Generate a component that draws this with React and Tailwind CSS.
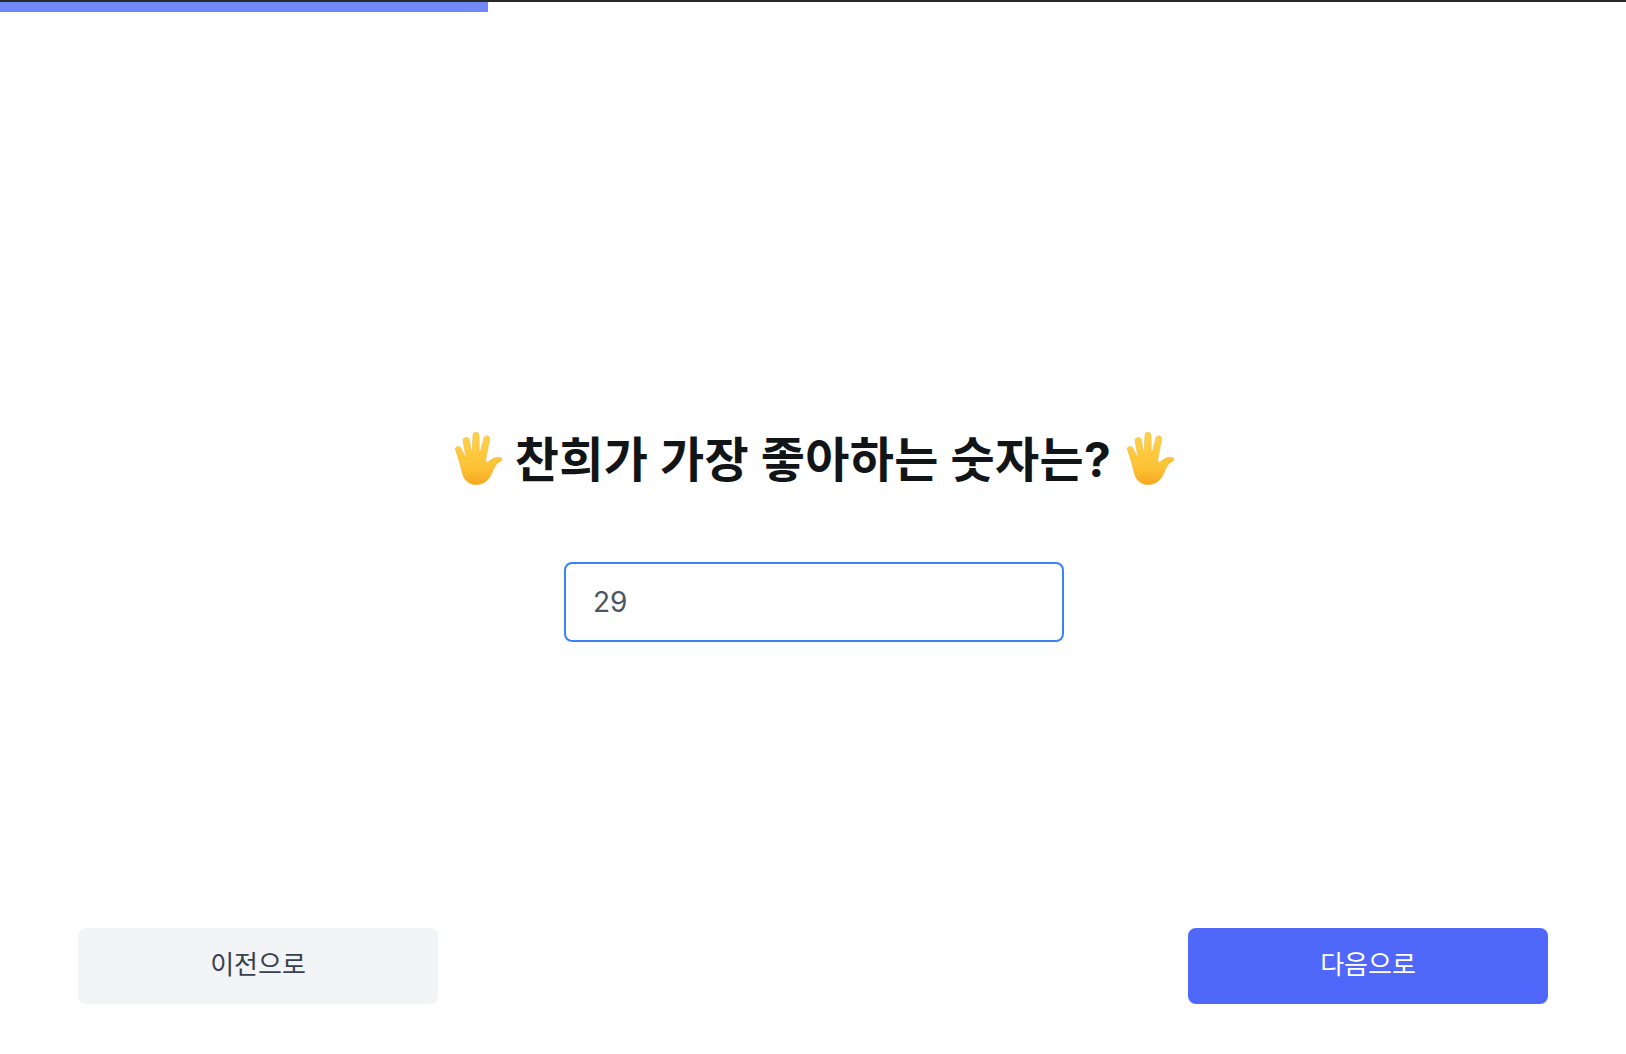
function Mano() {
  return (
    <svg viewBox="26 20 156 162" className="w-[52px] h-[54px] shrink-0" aria-hidden="true">
      <defs>
        <linearGradient id="piel" x1="0" y1="0" x2="0" y2="1">
          <stop offset="0" stopColor="#ffd34d" />
          <stop offset="0.65" stopColor="#fdc336" />
          <stop offset="1" stopColor="#f6a821" />
        </linearGradient>
      </defs>
      <path
        fill="url(#piel)"
        stroke="#f7ad2b"
        strokeWidth="1.5"
        d="M30 72C28 64 42 60 46 68L63 100L53 46C52 36 68 32 71 42L80 90L83 30C83 18 101 18 101 30L102 90L116 38C119 28 135 30 133 42L121 104C121 112 125 112 131 108C140 100 150 95 162 96C171 97 172 106 164 109C152 113 148 124 142 138C132 164 116 178 92 178C68 178 54 160 50 140C46 122 40 100 30 72Z"
      />
    </svg>
  );
}

export default function App() {
  return (
    <div className="min-h-[1054px] flex flex-col bg-white border-t-2 border-[#26282b] font-['Inter','Noto_Sans_CJK_KR',sans-serif]">
      <div className="h-[10px] w-[488px] bg-[#7189f7]" />

      <main className="flex-1 flex flex-col items-center pl-[2px] pt-[416px]">
        <h1 className="flex items-center gap-[10px] ml-[4px] h-[62px] text-[#111518] text-[48px] font-bold tracking-[0.35px] whitespace-nowrap">
          <Mano />
          <span className="-ml-[1px] mr-[5px] mt-[2px]">찬희가 가장 좋아하는 숫자는?</span>
          <Mano />
        </h1>
        <input
          type="text"
          defaultValue="29"
          className="mt-[72px] w-[500px] h-[80px] px-[27px] text-[28px] text-[#4b5563] border-2 border-[#3b82f6] rounded-lg outline-none"
        />
      </main>

      <div className="flex justify-between px-[78px] pb-[50px]">
        <button className="w-[360px] h-[76px] pb-[4px] rounded-lg bg-[#f3f4f6] text-[#374151] text-[26px]">이전으로</button>
        <button className="w-[360px] h-[76px] pb-[4px] rounded-lg bg-[#4f68f9] text-white text-[26px]">다음으로</button>
      </div>
    </div>
  );
}
